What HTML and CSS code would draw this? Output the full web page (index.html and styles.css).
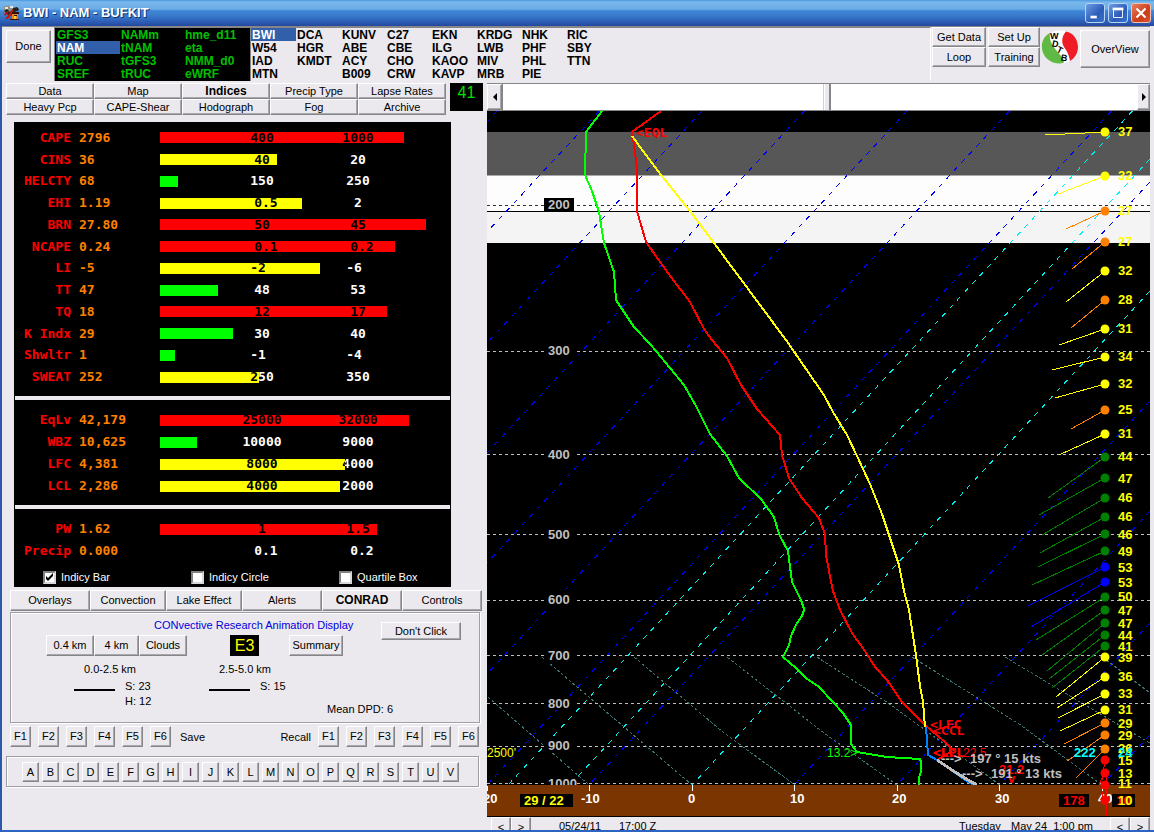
FILE: index.html
```
<!DOCTYPE html>
<html lang="en">
<head>
<meta charset="utf-8">
<title>BWI - NAM - BUFKIT</title>
<link rel="stylesheet" href="styles.css">
</head>
<body>
<header class="titlebar">
  <svg class="app-icon" viewBox="0 0 16 16" aria-hidden="true">
    <rect x="0" y="1" width="9" height="7" fill="#8a8f88"/><path d="M1 2h3v2H1zM6 1h3v2H6z" fill="#e8e8e0"/>
    <path d="M0 6l3-2 3 3 3-3 3 2-3 4-4 1z" fill="#222"/><path d="M1 14L9 4l2 1-7 9zM0 9l4-3 1 1-4 4z" fill="#c01810"/>
    <path d="M9 3l4-1 2 2-1 2H9z" fill="#28201c"/><path d="M8 8h6v7H8z" fill="#f08010"/><path d="M8 7h7v2H8zM10 10h3v1h-3zM6 14h9v1H6z" fill="#301008"/><path d="M10 11h2v3h-2z" fill="#ffd030"/>
  </svg>
  <h1 class="title">BWI - NAM - BUFKIT</h1>
  <button class="win-btn" aria-label="Minimize"><svg viewBox="0 0 20 20"><rect x="5" y="13" width="7" height="3" fill="#fff"/></svg></button>
  <button class="win-btn" aria-label="Maximize"><svg viewBox="0 0 20 20"><path d="M5 5h10v10H5z" fill="none" stroke="#fff"/><path d="M4 4h12v3H4z" fill="#fff"/></svg></button>
  <button class="win-btn win-close" aria-label="Close"><svg viewBox="0 0 20 20"><path d="M5 5l10 10M15 5L5 15" stroke="#fff" stroke-width="2.4"/></svg></button>
</header>

<div class="window">
  <div class="toolbar">
    <button class="btn done">Done</button>
    <ul class="models">
      <li>GFS3</li><li class="on">NAM</li><li>RUC</li><li>SREF</li>
      <li>NAMm</li><li>tNAM</li><li>tGFS3</li><li>tRUC</li>
      <li>hme_d11</li><li>eta</li><li>NMM_d0</li><li>eWRF</li>
    </ul>
    <ul class="stations">
      <li class="on">BWI</li><li>W54</li><li>IAD</li><li>MTN</li>
      <li>DCA</li><li>HGR</li><li>KMDT</li><li></li>
      <li>KUNV</li><li>ABE</li><li>ACY</li><li>B009</li>
      <li>C27</li><li>CBE</li><li>CHO</li><li>CRW</li>
      <li>EKN</li><li>ILG</li><li>KAOO</li><li>KAVP</li>
      <li>KRDG</li><li>LWB</li><li>MIV</li><li>MRB</li>
      <li>NHK</li><li>PHF</li><li>PHL</li><li>PIE</li>
      <li>RIC</li><li>SBY</li><li>TTN</li>
    </ul>
    <div class="pair"><button class="btn">Get Data</button><button class="btn">Loop</button></div>
    <div class="pair"><button class="btn">Set Up</button><button class="btn">Training</button></div>
    <svg class="logo" viewBox="0 0 38 34" role="img" aria-label="WDTB">
      <ellipse cx="19" cy="17" rx="18.5" ry="16.5" fill="#fff"/>
      <path d="M9 3C3 6 0 12 1 19c1 8 8 14 16 14.500 2 0 4 0 6-1C22 27 19 25 15 20 10 14 8 9 9 3z" fill="#5fb944"/>
      <path d="M25 1.500c7 1 12 8 12 15.500 0 6-3 11-8 14C28 25 26 21 23 17c-3-5-2-11 2-15.500z" fill="#ee1c25"/>
      <g class="logo-text"><text x="9" y="9">W</text><text x="11" y="17" transform="rotate(12 14 14)">D</text><text x="16" y="23" transform="rotate(25 19 20)">T</text><text x="20" y="31" transform="rotate(8 23 28)">B</text></g>
    </svg>
    <button class="btn overview">OverView</button>
  </div>

  <main class="main">
    <section class="left">
      <div class="top-tabs">
        <div class="tab-grid">
          <button class="btn">Data</button><button class="btn">Map</button><button class="btn current">Indices</button><button class="btn">Precip Type</button><button class="btn">Lapse Rates</button>
          <button class="btn">Heavy Pcp</button><button class="btn">CAPE-Shear</button><button class="btn">Hodograph</button><button class="btn">Fog</button><button class="btn">Archive</button>
        </div>
        <output class="hour">41</output>
      </div>

      <div class="indices">
        <table class="idx idx-a">
          <tr><th>CAPE</th><td>2796</td><td><div class="track"><i class="red" style="width:244px"></i><b class="k">400</b><b class="k">1000</b></div></td></tr>
          <tr><th>CINS</th><td>36</td><td><div class="track"><i class="yel" style="width:117px"></i><b class="k">40</b><b>20</b></div></td></tr>
          <tr><th>HELCTY</th><td>68</td><td><div class="track"><i class="grn" style="width:18px"></i><b>150</b><b>250</b></div></td></tr>
          <tr><th>EHI</th><td>1.19</td><td><div class="track"><i class="yel" style="width:142px"></i><b class="k">&nbsp;0.5</b><b>2</b></div></td></tr>
          <tr><th>BRN</th><td>27.80</td><td><div class="track"><i class="red" style="width:266px"></i><b class="k">50</b><b class="k">45</b></div></td></tr>
          <tr><th>NCAPE</th><td>0.24</td><td><div class="track"><i class="red" style="width:235px"></i><b class="k">&nbsp;0.1</b><b class="k">&nbsp;0.2</b></div></td></tr>
          <tr><th>LI</th><td>-5</td><td><div class="track"><i class="yel" style="width:160px"></i><b class="k">-2&nbsp;</b><b>-6&nbsp;</b></div></td></tr>
          <tr><th>TT</th><td>47</td><td><div class="track"><i class="grn" style="width:58px"></i><b>48</b><b>53</b></div></td></tr>
          <tr><th>TQ</th><td>18</td><td><div class="track"><i class="red" style="width:227px"></i><b class="k">12</b><b class="k">17</b></div></td></tr>
          <tr><th>K Indx</th><td>29</td><td><div class="track"><i class="grn" style="width:73px"></i><b>30</b><b>40</b></div></td></tr>
          <tr><th>Shwltr</th><td>1</td><td><div class="track"><i class="grn" style="width:15px"></i><b>-1&nbsp;</b><b>-4&nbsp;</b></div></td></tr>
          <tr><th>SWEAT</th><td>252</td><td><div class="track"><i class="yel" style="width:99px"></i><b><span class="k">2</span>50</b><b>350</b></div></td></tr>
        </table>
        <hr class="rule">
        <table class="idx idx-b">
          <tr><th>EqLv</th><td>42,179</td><td><div class="track"><i class="red" style="width:249px"></i><b class="k">25000</b><b class="k">32000</b></div></td></tr>
          <tr><th>WBZ</th><td>10,625</td><td><div class="track"><i class="grn" style="width:37px"></i><b>10000</b><b>9000</b></div></td></tr>
          <tr><th>LFC</th><td>4,381</td><td><div class="track"><i class="yel" style="width:185px"></i><b class="k">8000</b><b><span class="split">4</span>000</b></div></td></tr>
          <tr><th>LCL</th><td>2,286</td><td><div class="track"><i class="yel" style="width:180px"></i><b class="k">4000</b><b>2000</b></div></td></tr>
        </table>
        <hr class="rule">
        <table class="idx idx-c">
          <tr><th>PW</th><td>1.62</td><td><div class="track"><i class="red" style="width:217px"></i><b class="k">1</b><b class="k">1.5</b></div></td></tr>
          <tr><th>Precip</th><td>0.000</td><td><div class="track"><i style="width:0px"></i><b>&nbsp;0.1</b><b>&nbsp;0.2</b></div></td></tr>
        </table>
        <div class="checks">
          <label><input type="checkbox" checked>Indicy Bar</label>
          <label><input type="checkbox">Indicy Circle</label>
          <label><input type="checkbox">Quartile Box</label>
        </div>
      </div>

      <nav class="low-tabs">
        <button class="btn">Overlays</button><button class="btn">Convection</button><button class="btn">Lake Effect</button><button class="btn">Alerts</button><button class="btn current">CONRAD</button><button class="btn">Controls</button>
      </nav>

      <div class="conrad">
        <button class="btn dont">Don't Click</button>
        <h2 class="conrad-title">CONvective Research Animation Display</h2>
        <div class="conrad-row">
          <button class="btn b48">0.4 km</button><button class="btn b44">4 km</button><button class="btn b48">Clouds</button>
          <output class="e3">E3</output>
          <button class="btn summary">Summary</button>
        </div>
        <div class="layers">
          <div class="layer"><p>0.0-2.5 km</p><div class="vals"><hr><p>S: 23<br>H: 12</p></div></div>
          <div class="layer"><p>2.5-5.0 km</p><div class="vals"><hr><p>S: 15</p></div></div>
          <p class="dpd">Mean DPD: 6</p>
        </div>
      </div>

      <div class="fkeys">
        <button class="btn">F1</button><button class="btn">F2</button><button class="btn">F3</button><button class="btn">F4</button><button class="btn">F5</button><button class="btn">F6</button>
        <span class="save">Save</span><span>Recall</span>
        <button class="btn">F1</button><button class="btn">F2</button><button class="btn">F3</button><button class="btn">F4</button><button class="btn">F5</button><button class="btn">F6</button>
      </div>

      <div class="letters">
        <button class="btn">A</button><button class="btn">B</button><button class="btn">C</button><button class="btn">D</button><button class="btn">E</button><button class="btn">F</button><button class="btn">G</button><button class="btn">H</button><button class="btn">I</button><button class="btn">J</button><button class="btn">K</button><button class="btn">L</button><button class="btn">M</button><button class="btn">N</button><button class="btn">O</button><button class="btn">P</button><button class="btn">Q</button><button class="btn">R</button><button class="btn">S</button><button class="btn">T</button><button class="btn">U</button><button class="btn">V</button>
      </div>
    </section>

    <section class="right">
      <div class="scroll">
        <button class="btn arrow" aria-label="Back"><svg viewBox="0 0 8 8"><path d="M6 0v8L2 4z"/></svg></button>
        <div class="well"></div><div class="thumb"></div><div class="well well-b"></div>
        <button class="btn arrow" aria-label="Forward"><svg viewBox="0 0 8 8"><path d="M2 0v8l4-4z"/></svg></button>
      </div>

      <svg class="plot" viewBox="487 111 663 705" role="img" aria-label="Sounding">
        <rect x="487" y="111" width="663" height="705" fill="#000"/>
        <rect x="487" y="132" width="663" height="43" fill="#575757"/>
        <rect x="487" y="175" width="663" height="1" fill="#a8a8a8"/>
        <rect x="487" y="176" width="663" height="67" fill="#fdfdfd"/>
        <rect x="487" y="211" width="663" height="32" fill="#f4f4f4"/>
        <path class="crisp" d="M487 211.500H1150" stroke="#000"/>

        <g class="iso blue">
          <path d="M497 111L487 122M599.500 111L487 232M702 111L487 343M804.500 111L487 453M907 111L487 563M1009.500 111L487 674M1111.500 111L487 785M1150 182L589 785M1150 401L794 785M1150 511L897 785M1150 623L999 785M1150 735L1102 785"/>
        </g>
        <g class="iso cyan">
          <path d="M1132.500 111L508 785M1150 159L570 785M1150 291L692 785"/>
        </g>
        <g class="adiabat">
          <path d="M488 697L589 785M542 657L692 785M634 657L724 733 795 785M727 657L824 733 897 785M817 657L891 705 1000 785M912 657L944 677 1019 724 1102 785M1005 657L1085 705 1150 743M1102 657L1150 693"/>
        </g>
        <path class="isobar dark" d="M487 205.500H1150"/>
        <path class="isobar" d="M487 351.500H1150M487 454.500H1150M487 534.500H1150M487 600.500H1150M487 655.500H1150M487 703.500H1150M487 746.500H1150M487 783.500H1150"/>
        <g fill="#000"><rect x="544" y="198" width="30" height="13"/><rect x="544" y="345" width="32" height="13"/><rect x="544" y="448" width="32" height="13"/><rect x="544" y="528" width="32" height="13"/><rect x="544" y="594" width="32" height="13"/><rect x="544" y="649" width="32" height="13"/><rect x="544" y="697" width="32" height="13"/><rect x="544" y="740" width="32" height="13"/><rect x="544" y="777" width="32" height="8"/></g>
        <g class="lab grey">
          <text x="548" y="209">200</text><text x="548" y="355">300</text><text x="548" y="459">400</text><text x="548" y="539">500</text><text x="548" y="604">600</text><text x="548" y="660">700</text><text x="548" y="708">800</text><text x="548" y="750">900</text><text x="548" y="788">1000</text>
        </g>

        <text class="thin" x="487" y="757" fill="#ff0">2500'</text>

        <g class="trace">
          <path stroke="#0f0" d="M602 111L586 132 585 175 592 191 599 212 604 243 614 272 616 300 634 327 650 344 656 351 684 385 696 406 710 434 727 456 739 478 761 499 774 517 779 534 788 551 792 582 795 588 801 600 804 609 803 614 796 625 791 636 789 645 783 657 796 668 806 678 819 687 833 702 843 713 851 725 851 744 857 752 887 757 920 759 921 762 921 772 919 777 919 785"/>
          <path stroke="#f00" d="M661 111L632 132 635 152 637 170 637 211 646 242 668 273 690 302 704 329 712 340 727 358 741 385 757 409 780 435 782 455 789 478 802 498 819 518 825 534 826 555 829 571 833 591 840 610 852 633 865 651 875 667 887 680 902 702 925 725 945 742 951 748 949 753 937 760"/>
          <path stroke="#ff0" d="M632 136L646 155 661 175 690 211 714 243 786 340 824 395 833 412 847 435 857 456 870 484 882 514 890 538 899 565 904 591 909 610 916 655 920 686 923 702 925 727"/>
          <path stroke="#0080ff" d="M926 727L928 755 937 760 968 782 975 785"/>
          <path stroke="#c0c0c0" stroke-width="3" d="M937 760L955 772 968 780 977 785"/>
        </g>

        <g class="mono" fill="#f00"><text x="636" y="137">&lt;EQL</text><text x="930" y="729">&lt;LFC</text><text x="933" y="735">&lt;CCL</text><text x="933" y="757">&lt;LCL</text><text x="933" y="757">&lt;LPL</text></g>
        <g class="thin"><text x="963" y="757" fill="#f00">22.5</text><text x="827" y="757" fill="#0f0">13.2&gt;</text></g>
        <g class="lab" fill="#f00"><text x="999" y="774">31.2</text><text x="1008" y="783">v</text></g>
        <g class="lab grey"><text x="941" y="763">---&gt;</text><text x="970" y="763">197 ° 15 kts</text><text x="962" y="778">---&gt;</text><text x="991" y="778">191 ° 13 kts</text></g>

        <rect x="487" y="785" width="663" height="31" fill="#7b3500"/>
        <path class="crisp" d="M487 785.500V791M589.500 785V791M692.500 785V791M794.500 785V791M897.500 785V791M999.500 785V791M1102.500 785V791" stroke="#fff"/>
        <g class="lab" fill="#fff"><text x="483" y="803">20</text><text x="581" y="803">-10</text><text x="688" y="803">0</text><text x="790" y="803">10</text><text x="892" y="803">20</text><text x="995" y="803">30</text><text x="1098" y="803">40</text></g>
        <rect x="520" y="794" width="53" height="13"/><rect x="1059" y="794" width="30" height="13"/><rect x="1112" y="794" width="23" height="13"/>
        <g class="lab"><text x="524" y="805" fill="#ff0">29 / 22</text><text x="1063" y="805" fill="#f00">178</text><text x="1116" y="805" fill="#f00">10</text></g>

        <g class="barb" stroke="#ff0"><path d="M1105 132L1045 135M1105 176L1058 194M1105 271L1066 302M1105 329L1059 345M1105 357L1052 370M1105 384L1055 398M1105 434L1059 455M1105 657L1056 697M1105 677L1057 708M1105 694L1058 718M1105 710L1060 731"/></g>
        <g class="barb" stroke="#ff8000"><path d="M1105 211L1066 229M1105 242L1072 269M1105 300L1071 328M1105 410L1071 429M1105 723L1064 744M1105 735L1067 761M1105 749L1076 778"/></g>
        <g class="barb" stroke="#008000"><path d="M1105 457L1048 498M1105 478L1039 515M1105 498L1042 535M1105 517L1040 553M1105 534L1038 567M1105 551L1032 585M1105 597L1036 640M1105 610L1042 655M1105 623L1047 671M1105 635L1049 679M1105 646L1052 688"/></g>
        <g class="barb" stroke="#00f"><path d="M1105 567L1028 606M1105 582L1031 627"/></g>
        <g class="barb" stroke="#f00"><path d="M1105 760L1102 780M1104 773L1099 785M1106 773V800M1104 784L1102 800M1106 800V816"/></g>

        <g fill="#ff0"><circle cx="1105" cy="132" r="4.500"/><circle cx="1105" cy="176" r="4.500"/><circle cx="1105" cy="271" r="4.500"/><circle cx="1105" cy="329" r="4.500"/><circle cx="1105" cy="357" r="4.500"/><circle cx="1105" cy="384" r="4.500"/><circle cx="1105" cy="434" r="4.500"/><circle cx="1105" cy="657" r="4.500"/><circle cx="1105" cy="677" r="4.500"/><circle cx="1105" cy="694" r="4.500"/><circle cx="1105" cy="710" r="4.500"/></g>
        <g fill="#ff8000"><circle cx="1105" cy="211" r="4.500"/><circle cx="1105" cy="242" r="4.500"/><circle cx="1105" cy="300" r="4.500"/><circle cx="1105" cy="410" r="4.500"/><circle cx="1105" cy="723" r="4.500"/><circle cx="1105" cy="735" r="4.500"/><circle cx="1105" cy="749" r="4.500"/></g>
        <g fill="#008000"><circle cx="1105" cy="457" r="4.500"/><circle cx="1105" cy="478" r="4.500"/><circle cx="1105" cy="498" r="4.500"/><circle cx="1105" cy="517" r="4.500"/><circle cx="1105" cy="534" r="4.500"/><circle cx="1105" cy="551" r="4.500"/><circle cx="1105" cy="597" r="4.500"/><circle cx="1105" cy="610" r="4.500"/><circle cx="1105" cy="623" r="4.500"/><circle cx="1105" cy="635" r="4.500"/><circle cx="1105" cy="646" r="4.500"/></g>
        <g fill="#00f"><circle cx="1105" cy="567" r="4.500"/><circle cx="1105" cy="582" r="4.500"/></g>
        <g fill="#f00"><circle cx="1105" cy="760" r="4.500"/><circle cx="1105" cy="773" r="4.500"/><circle cx="1105" cy="785" r="4.500"/><circle cx="1105" cy="800" r="4.500"/></g>

        <g class="lab" fill="#ff0">
          <text x="1118" y="136">37</text><text x="1118" y="180">32</text><text x="1118" y="215">27</text><text x="1118" y="246">27</text><text x="1118" y="275">32</text><text x="1118" y="304">28</text><text x="1118" y="333">31</text><text x="1118" y="361">34</text><text x="1118" y="388">32</text><text x="1118" y="414">25</text><text x="1118" y="438">31</text><text x="1118" y="461">44</text><text x="1118" y="483">47</text><text x="1118" y="502">46</text><text x="1118" y="521">46</text><text x="1118" y="539">46</text><text x="1118" y="556">49</text><text x="1118" y="572">53</text><text x="1118" y="587">53</text><text x="1118" y="601">50</text><text x="1118" y="615">47</text><text x="1118" y="628">47</text><text x="1118" y="640">44</text><text x="1118" y="651">41</text><text x="1118" y="662">39</text><text x="1118" y="681">36</text><text x="1118" y="698">33</text><text x="1118" y="714">31</text><text x="1118" y="728">29</text><text x="1118" y="740">29</text><text x="1118" y="753">26</text><text x="1118" y="765">15</text><text x="1118" y="778">13</text><text x="1118" y="788">11</text><text x="1118" y="805">10</text>
        </g>
        <g class="lab" fill="#0ff"><text x="1074" y="757">222</text><text x="1118" y="757">24</text></g>
      </svg>

      <footer class="status">
        <button class="btn">&lt;</button><button class="btn">&gt;</button>
        <span class="date">05/24/11</span><span class="utc">17:00 Z</span>
        <span class="day">Tuesday</span><span class="local">May 24&nbsp; 1:00 pm</span>
        <button class="btn">&lt;</button><button class="btn">&gt;</button>
      </footer>
    </section>
  </main>
</div>
</body>
</html>
```
FILE: styles.css
```
* { box-sizing: border-box; }
html, body { height: 100%; }
body {
  margin: 0;
  display: flex;
  flex-direction: column;
  overflow: hidden;
  background: #ebe9ed;
  color: #000;
  font: 11px/13px "Liberation Sans", Arial, sans-serif;
}
ul, p, h1, h2 { margin: 0; padding: 0; list-style: none; }
button, input { font: inherit; color: inherit; margin: 0; padding: 0; }

.titlebar {
  display: flex;
  align-items: center;
  gap: 3px;
  flex: none;
  height: 26px;
  padding: 0 3px 0 4px;
  background: linear-gradient(#4a98e0 0, #78b8ec 2px, #6cace6 9px, #3c86d6 11px, #3a7ccc 15px, #2c5cb4 22px, #24489c 26px);
}
.app-icon { width: 16px; height: 16px; }
.title { flex: 1; font-size: 13px; line-height: 16px; color: #fff; text-shadow: 1px 1px 0 #103070; }
.win-btn {
  width: 20px;
  height: 20px;
  border: 1px solid #b8d4f4;
  border-radius: 3px;
  background: linear-gradient(135deg, #6c9ce4, #2c5cb8 60%, #3a74cc);
}
.win-btn svg { display: block; width: 18px; height: 18px; }
.win-close { border-color: #f0c0b0; background: linear-gradient(135deg, #e88060, #cc3c18 60%, #d85030); }

.window {
  flex: 1;
  min-height: 0;
  display: flex;
  flex-direction: column;
  overflow: hidden;
  border-left: 2px solid #2c58ac;
  border-bottom: 2px solid #2c64c4;
  padding-right: 4px;
}

.btn {
  background: #ebe9ed;
  border: 1px solid;
  border-color: #fff #86868a #86868a #fff;
  box-shadow: inset -1px -1px 0 #a8a8ac;
  text-align: center;
  white-space: nowrap;
  border-radius: 0;
}
.current { font-weight: bold; font-size: 12px; }

.toolbar { display: flex; flex: none; height: 57px; padding-left: 4px; border-top: 1px solid #86868a; }
.done { width: 45px; height: 33px; margin: 3px 3px 0 0; }
.models, .stations {
  display: grid;
  grid-auto-flow: column;
  grid-template-rows: repeat(4, 13px);
  align-content: start;
  font: bold 12px/14px "Liberation Sans", Arial, sans-serif;
  height: 54px;
  border: 1px solid #86868a;
  border-width: 1px 0 0 1px;
}
.models { width: 196px; grid-auto-columns: 64px; background: #000; color: #00c000; padding-left: 1px; }
.stations { flex: 1; grid-auto-columns: 45px; border-right: 1px solid #fff; }
.models li, .stations li { padding-left: 1px; }
.models .on, .stations .on { background: #315fa9; color: #fff; }
.pair { display: grid; grid-template-rows: 20px 20px; width: 54px; margin-left: 1px; align-content: start; }
.pair + .pair { margin-left: 2px; width: 52px; }
.logo { width: 38px; height: 34px; margin: 3px 1px 0; }
.logo-text { font: bold 9px "Liberation Sans", Arial, sans-serif; }
.overview { width: 70px; height: 38px; margin-top: 3px; }

.main { flex: 1; display: grid; grid-template-columns: 485px minmax(0, 1fr); align-items: start; }
.left { padding-left: 4px; }
.top-tabs { display: flex; gap: 3px; }
.tab-grid { display: grid; grid-template-columns: repeat(5, 88px); grid-auto-rows: 16px; width: 441px; }
.tab-grid .btn { line-height: 12px; }
.hour { width: 33px; height: 28px; background: #000; color: #00e000; font-size: 16px; line-height: 20px; text-align: center; }

.indices { width: 437px; margin: 7px 0 0 8px; padding-top: 5px; background: #000; }
.idx {
  border-collapse: collapse;
  table-layout: fixed;
  width: 437px;
  font: bold 13px/16px "DejaVu Sans Mono", monospace;
  color: #fff;
}
.idx th, .idx td { padding: 0; font-weight: bold; white-space: nowrap; }
.idx th { width: 57px; text-align: right; color: #f00; }
.idx td { width: 89px; padding-left: 8px; color: #ff8000; }
.idx td:last-child { width: auto; padding: 0; color: #fff; }
.idx-a { height: 261px; }
.idx-b { height: 88px; }
.idx-c { height: 44px; }
.rule { height: 4px; margin: 8px 1px 9px; border: 0; background: #ebe9ed; }
.track { display: grid; grid-template-columns: 54px 96px 96px; align-items: center; text-align: center; }
.track i { grid-area: 1 / 1 / 2 / 5; height: 11px; }
.track b { grid-row: 1; grid-column: 2; z-index: 1; }
.track b + b { grid-column: 3; }
.k { color: #000; }
.red { background: #f00; }
.yel { background: #ff0; }
.grn { background: #0f0; }
.split { background: linear-gradient(90deg, #000 3px, #fff 3px); background-clip: text; -webkit-background-clip: text; color: transparent; }
.checks { display: grid; grid-template-columns: repeat(3, 148px); padding: 8px 0 2px 29px; color: #fff; }
.checks label { display: flex; align-items: center; gap: 5px; height: 15px; }
.checks input { appearance: none; width: 13px; height: 13px; background: #fff; border: 2px solid; border-color: #808080 #d8d6da #d8d6da #808080; }
.checks input:checked::before { content: ""; display: block; width: 9px; height: 9px; background: #000; clip-path: polygon(1px 3px, 3px 5px, 8px 0, 8px 3px, 3px 8px, 1px 6px); }

.low-tabs { display: grid; grid-template-columns: 80px 76px 76px 80px 80px 80px; height: 21px; margin: 3px 0 0 4px; }
.conrad {
  width: 470px;
  height: 111px;
  margin: 1px 0 0 4px;
  border: 1px solid #a0a0a4;
  box-shadow: inset 1px 1px 0 #fff, 1px 1px 0 #fff;
}
.dont { float: right; width: 80px; height: 18px; margin: 9px 18px 0 0; }
.conrad-title { padding: 6px 0 0 143px; font-size: 11px; font-weight: normal; color: #0000e0; }
.conrad-row { display: flex; height: 21px; margin: 3px 0 0 35px; }
.conrad-row .btn { height: 21px; }
.b48 { width: 48px; }
.b44 { width: 45px; }
.e3 { width: 29px; height: 21px; margin: 0 30px 0 43px; background: #000; color: #ff0; font-size: 16px; line-height: 21px; text-align: center; }
.summary { width: 54px; }
.layers { display: flex; margin: 7px 0 0 63px; }
.layer { width: 135px; }
.layer > p { padding-left: 10px; }
.vals { display: flex; gap: 10px; line-height: 15px; padding-top: 3px; }
.vals hr { width: 41px; height: 2px; margin: 10px 0 0; border: 0; background: #000; }
.dpd { align-self: end; margin: 0 0 -7px -17px; }

.fkeys { display: flex; gap: 7px; width: 469px; margin: 3px 0 0 4px; }
.fkeys .btn { width: 21px; height: 21px; }
.fkeys span { line-height: 23px; }
.save { padding-left: 2px; flex: 1; }
.letters { display: flex; gap: 3px; width: 473px; margin-top: 7px; padding: 5px 15px 4px; border: 1px solid #a0a0a4; box-shadow: inset 1px 1px 0 #fff, 1px 1px 0 #fff; }
.letters .btn { width: 17px; height: 20px; }

.scroll { display: flex; height: 28px; background: #fff; border-top: 1px solid #86868a; border-bottom: 1px solid #86868a; }
.arrow { width: 15px; }
.arrow:last-child { width: 13px; }
.arrow svg { display: block; width: 8px; height: 8px; margin: 0 auto; }
.well { flex: 322; border-left: 1px solid #86868a; }
.well-b { flex: 306; border-left: 0; }
.thumb { width: 7px; background: #ebe9ed; border-left: 1px solid #fff; border-right: 2px solid #86868a; box-shadow: -1px 0 0 #d0d0d4; }
.plot { display: block; width: 100%; height: auto; }

.crisp, .isobar, .iso, .adiabat, .barb { shape-rendering: crispEdges; fill: none; }
.iso { stroke-dasharray: 5 6; }
.blue { stroke: #0000f0; }
.cyan { stroke: #00f0f0; }
.adiabat { stroke: #3c7474; stroke-dasharray: 3 2; }
.isobar { stroke: #c0c0c0; stroke-dasharray: 3 3; }
.dark { stroke: #303030; }
.trace { fill: none; stroke-width: 2; stroke-linejoin: round; shape-rendering: crispEdges; }
.lab { font: bold 13px "Liberation Sans", Arial, sans-serif; }
.thin { font: 12px "Liberation Sans", Arial, sans-serif; }
.mono { font: bold 13px "DejaVu Sans Mono", monospace; }
.grey { fill: #c0c0c0; }

.status { display: flex; height: 18px; padding-left: 4px; border-top: 1px solid #000; line-height: 18px; }
.status .btn { width: 20px; height: 17px; }
.date { margin-left: 28px; width: 60px; }
.utc { flex: 1; }
.day { width: 52px; }
.local { width: 99px; }
```
